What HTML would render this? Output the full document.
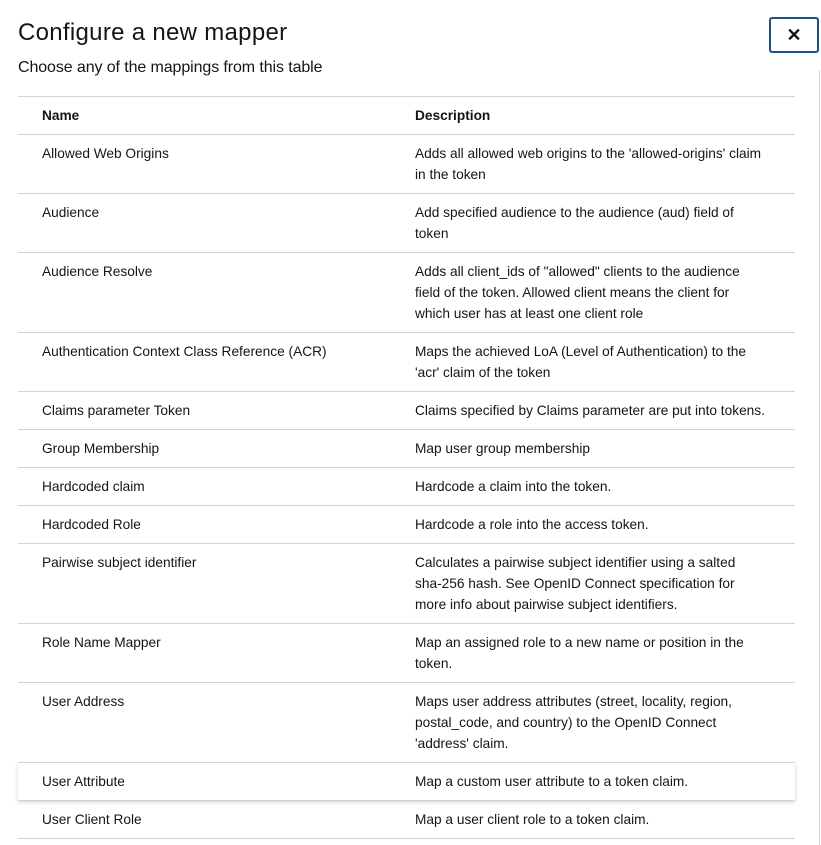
<!DOCTYPE html>
<html><head><meta charset="utf-8"><style>
body{margin:0;width:821px;height:845px;background:#fff;font-family:"Liberation Sans",sans-serif;color:#151515;overflow:hidden;position:relative}
h1{position:absolute;left:18px;top:16px;margin:0;font-size:24px;font-weight:normal;line-height:34px;letter-spacing:0.3px}
.sub{position:absolute;left:18px;top:57px;font-size:16px;line-height:22px;letter-spacing:-0.1px}
.close{position:absolute;left:769px;top:17px;width:46px;height:32px;border:2px solid #1f4e8c;border-radius:3px;box-sizing:content-box;font-size:18px;font-weight:bold;text-align:center;line-height:32px}
.sb{position:absolute;left:819px;top:70px;width:1px;height:775px;background:#d2d2d2}
.hov{position:absolute;left:18px;top:762px;width:777px;height:38px;box-shadow:0 2px 4px rgba(0,0,0,.2);background:#fff}
table{position:absolute;left:18px;top:96px;width:777px;border-collapse:collapse;font-size:13.7px;line-height:21px}
td,th{border-top:1px solid #d2d2d2;padding:8px 0 0 0;vertical-align:top;text-align:left;white-space:nowrap}
th{font-weight:bold;height:29px}
td:first-child,th:first-child{padding-left:24px;width:373px}
tr:last-child td{border-bottom:1px solid #d2d2d2}
tr.a td{height:29px}tr.b td{height:50px}tr.c td{height:71px}
</style></head><body>
<h1>Configure a new mapper</h1>
<div class="sub">Choose any of the mappings from this table</div>
<div class="close">✕</div>
<div class="sb"></div>
<div class="hov"></div>
<table>
<tr><th>Name</th><th>Description</th></tr>
<tr class="b"><td>Allowed Web Origins</td><td>Adds all allowed web origins to the 'allowed-origins' claim<br>in the token</td></tr>
<tr class="b"><td>Audience</td><td>Add specified audience to the audience (aud) field of<br>token</td></tr>
<tr class="c"><td>Audience Resolve</td><td>Adds all client_ids of "allowed" clients to the audience<br>field of the token. Allowed client means the client for<br>which user has at least one client role</td></tr>
<tr class="b"><td>Authentication Context Class Reference (ACR)</td><td>Maps the achieved LoA (Level of Authentication) to the<br>'acr' claim of the token</td></tr>
<tr class="a"><td>Claims parameter Token</td><td>Claims specified by Claims parameter are put into tokens.</td></tr>
<tr class="a"><td>Group Membership</td><td>Map user group membership</td></tr>
<tr class="a"><td>Hardcoded claim</td><td>Hardcode a claim into the token.</td></tr>
<tr class="a"><td>Hardcoded Role</td><td>Hardcode a role into the access token.</td></tr>
<tr class="c"><td>Pairwise subject identifier</td><td>Calculates a pairwise subject identifier using a salted<br>sha-256 hash. See OpenID Connect specification for<br>more info about pairwise subject identifiers.</td></tr>
<tr class="b"><td>Role Name Mapper</td><td>Map an assigned role to a new name or position in the<br>token.</td></tr>
<tr class="c"><td>User Address</td><td>Maps user address attributes (street, locality, region,<br>postal_code, and country) to the OpenID Connect<br>'address' claim.</td></tr>
<tr class="a"><td>User Attribute</td><td>Map a custom user attribute to a token claim.</td></tr>
<tr class="a"><td>User Client Role</td><td>Map a user client role to a token claim.</td></tr>
</table>
</body></html>
